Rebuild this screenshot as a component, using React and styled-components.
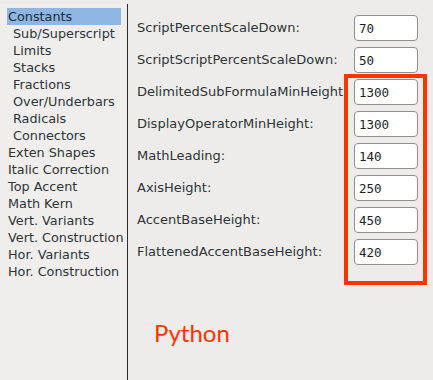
import React from "react";
import styled, { createGlobalStyle } from "styled-components";

const Global = createGlobalStyle`
  html, body {
    margin: 0;
    padding: 0;
    width: 433px;
    height: 380px;
    overflow: hidden;
    background: #edecea;
  }
`;

const sections = [
  { name: "Constants", sub: false },
  { name: "Sub/Superscript", sub: true },
  { name: "Limits", sub: true },
  { name: "Stacks", sub: true },
  { name: "Fractions", sub: true },
  { name: "Over/Underbars", sub: true },
  { name: "Radicals", sub: true },
  { name: "Connectors", sub: true },
  { name: "Exten Shapes", sub: false },
  { name: "Italic Correction", sub: false },
  { name: "Top Accent", sub: false },
  { name: "Math Kern", sub: false },
  { name: "Vert. Variants", sub: false },
  { name: "Vert. Construction", sub: false },
  { name: "Hor. Variants", sub: false },
  { name: "Hor. Construction", sub: false },
];

const constants = [
  { label: "ScriptPercentScaleDown:", value: "70" },
  { label: "ScriptScriptPercentScaleDown:", value: "50" },
  { label: "DelimitedSubFormulaMinHeight:", value: "1300" },
  { label: "DisplayOperatorMinHeight:", value: "1300" },
  { label: "MathLeading:", value: "140" },
  { label: "AxisHeight:", value: "250" },
  { label: "AccentBaseHeight:", value: "450" },
  { label: "FlattenedAccentBaseHeight:", value: "420" },
];

const App = () => {
  return (
    <Window>
      <Global />
      <Sidebar>
        {sections.map((s, i) => (
          <Item key={s.name} $sub={s.sub} $active={i === 0}>
            {s.name}
          </Item>
        ))}
      </Sidebar>
      <Main>
        <Rows>
          {constants.map((c) => (
            <Row key={c.label}>
              <Label>{c.label}</Label>
              <Field defaultValue={c.value} />
            </Row>
          ))}
        </Rows>
        <Highlight />
        <Caption>Python</Caption>
      </Main>
    </Window>
  );
};

const Window = styled.div`
  display: flex;
  width: 433px;
  height: 380px;
  font-family: "DejaVu Sans", sans-serif;
  font-size: 13px;
  color: #2e3436;
`;

const Sidebar = styled.div`
  width: 128px;
  flex-shrink: 0;
  background: #efeeed;
  box-sizing: border-box;
  border-right: 1px solid #2e2e2e;
  margin-top: 4px;
  padding-top: 4px;
  font-size: 12.8px;
`;

const Item = styled.div`
  height: 17px;
  line-height: 17px;
  margin-left: 7px;
  margin-right: 6px;
  padding-left: ${(p) => (p.$sub ? "6px" : "1px")};
  white-space: nowrap;
  background: ${(p) => (p.$active ? "#8fb5e2" : "transparent")};
  color: ${(p) => (p.$active ? "#1d2a3a" : "#2e3436")};
`;

const Main = styled.div`
  position: relative;
  flex: 1;
  padding: 15px 0 0 9px;
`;

const Rows = styled.div`
  display: flex;
  flex-direction: column;
  gap: 6px;
`;

const Row = styled.div`
  display: grid;
  grid-template-columns: 216px 64px;
  align-items: center;
  height: 26px;
`;

const Label = styled.span`
  white-space: nowrap;
  overflow: hidden;
  padding-bottom: 1px;
`;

const Field = styled.input`
  box-sizing: border-box;
  width: 64px;
  height: 26px;
  margin-left: 1px;
  border: 1px solid #8f8f8d;
  border-radius: 4px;
  background: #fff;
  padding: 0 0 0 4px;
  font-family: "DejaVu Sans Mono", monospace;
  font-size: 12.5px;
  color: #1e1e1e;
  outline: none;
`;

const Highlight = styled.div`
  position: absolute;
  left: 216px;
  top: 74px;
  width: 83px;
  height: 211px;
  box-sizing: border-box;
  border: 4px solid #ff3300;
  pointer-events: none;
`;

const Caption = styled.div`
  margin: 53px 0 0 17px;
  font-family: Lato, sans-serif;
  font-size: 24px;
  color: #ff3300;
`;

export default App;
